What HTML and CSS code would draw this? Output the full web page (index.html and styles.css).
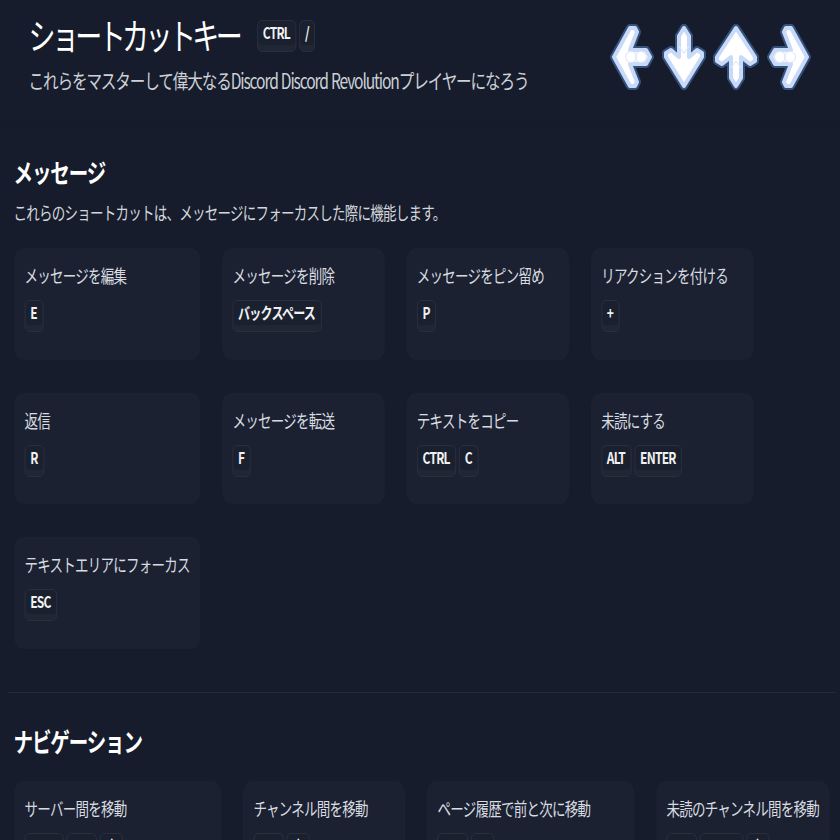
FILE: index.html
```html
<!DOCTYPE html>
<html lang="ja">
<head>
<meta charset="utf-8">
<title>ショートカットキー</title>
<link rel="stylesheet" href="styles.css">
</head>
<body>
<div class="page">
  <header class="hero">
    <div class="hero-text">
      <div class="hero-title-row">
        <h1 class="hero-title">ショートカットキー</h1>
        <div class="keys"><kbd class="key">CTRL</kbd><kbd class="key">/</kbd></div>
      </div>
      <p class="hero-sub">これらをマスターして偉大なるDiscord Discord Revolutionプレイヤーになろう</p>
    </div>
    <svg class="arrows" viewBox="606 20 210 74" preserveAspectRatio="none" aria-hidden="true">
      <g class="arrow-outline">
        <polygon points="614,57 630,28 635,28 637,32 630,50 646,50 650,57 646,64 630,64 637,82 635,86 630,86"/>
        <polygon points="684,86 666,57 666,53 671,50 679,57 679,36 684,28 689,36 689,57 697,50 702,53 702,57"/>
        <polygon points="736,28 755,57 755,61 750,64 741,57 741,78 736,86 731,78 731,57 722,64 717,61 717,57"/>
        <polygon points="807,57 791,28 786,28 784,32 791,50 775,50 771,57 775,64 791,64 784,82 786,86 791,86"/>
      </g>
      <g class="arrow-body">
        <polygon points="614,57 630,28 635,28 637,32 630,50 646,50 650,57 646,64 630,64 637,82 635,86 630,86"/>
        <polygon points="684,86 666,57 666,53 671,50 679,57 679,36 684,28 689,36 689,57 697,50 702,53 702,57"/>
        <polygon points="736,28 755,57 755,61 750,64 741,57 741,78 736,86 731,78 731,57 722,64 717,61 717,57"/>
        <polygon points="807,57 791,28 786,28 784,32 791,50 775,50 771,57 775,64 791,64 784,82 786,86 791,86"/>
      </g>
      <g class="arrow-detail">
        <ellipse cx="631" cy="57" rx="5.5" ry="5.5"/>
        <ellipse cx="641" cy="57" rx="5.5" ry="5.5"/>
        <path d="M679,46 L684,53 L689,46"/>
        <path d="M731,68 L736,61 L741,68"/>
        <ellipse cx="780" cy="57" rx="5.5" ry="5.5"/>
        <ellipse cx="790" cy="57" rx="5.5" ry="5.5"/>
      </g>
    </svg>
  </header>

  <section class="section">
    <h2 class="section-title">メッセージ</h2>
    <p class="section-desc">これらのショートカットは、メッセージにフォーカスした際に機能します。</p>
    <div class="grid grid-messages">
      <div class="card"><div class="card-label">メッセージを編集</div><div class="keys"><kbd class="key">E</kbd></div></div>
      <div class="card"><div class="card-label">メッセージを削除</div><div class="keys"><kbd class="key">バックスペース</kbd></div></div>
      <div class="card"><div class="card-label">メッセージをピン留め</div><div class="keys"><kbd class="key">P</kbd></div></div>
      <div class="card"><div class="card-label">リアクションを付ける</div><div class="keys"><kbd class="key">+</kbd></div></div>
      <div class="card"><div class="card-label">返信</div><div class="keys"><kbd class="key">R</kbd></div></div>
      <div class="card"><div class="card-label">メッセージを転送</div><div class="keys"><kbd class="key">F</kbd></div></div>
      <div class="card"><div class="card-label">テキストをコピー</div><div class="keys"><kbd class="key">CTRL</kbd><kbd class="key">C</kbd></div></div>
      <div class="card"><div class="card-label">未読にする</div><div class="keys"><kbd class="key">ALT</kbd><kbd class="key">ENTER</kbd></div></div>
      <div class="card"><div class="card-label">テキストエリアにフォーカス</div><div class="keys"><kbd class="key">ESC</kbd></div></div>
    </div>
  </section>

  <section class="section section-divided">
    <h2 class="section-title section-title-gap">ナビゲーション</h2>
    <div class="grid grid-nav">
      <div class="card"><div class="card-label">サーバー間を移動</div><div class="keys"><kbd class="key">CTRL</kbd><kbd class="key">ALT</kbd><kbd class="key">↑</kbd></div></div>
      <div class="card"><div class="card-label">チャンネル間を移動</div><div class="keys"><kbd class="key">ALT</kbd><kbd class="key">↑</kbd></div></div>
      <div class="card"><div class="card-label">ページ履歴で前と次に移動</div><div class="keys"><kbd class="key">ALT</kbd><kbd class="key">←</kbd></div></div>
      <div class="card"><div class="card-label">未読のチャンネル間を移動</div><div class="keys"><kbd class="key">ALT</kbd><kbd class="key">SHIFT</kbd><kbd class="key">↑</kbd></div></div>
    </div>
  </section>
</div>
</body>
</html>
```

FILE: styles.css
```css
html, body {
  margin: 0;
  padding: 0;
  height: 840px;
  overflow: hidden;
  background: #161c2b;
}

.page {
  width: 1120px;
  transform: scaleX(0.75);
  transform-origin: 0 0;
  font-family: "Noto Sans CJK JP", "Noto Sans", sans-serif;
  color: #d3d6dc;
}

.hero {
  display: flex;
  justify-content: space-between;
  align-items: center;
  height: 113px;
  padding: 0 32px 10px 38px;
  border-bottom: 1px solid #141a27;
}

.hero-text {
  margin-top: -5px;
}

.hero-title-row {
  display: flex;
  align-items: center;
  gap: 24px;
}

.hero-title {
  margin: 0;
  padding-bottom: 4px;
  font-size: 36px;
  line-height: 40px;
  letter-spacing: -4.8px;
  font-weight: 400;
  color: #fff;
}

.hero-sub {
  margin: 7px 0 0;
  font-size: 20.8px;
  line-height: 30px;
  letter-spacing: -1.5px;
  word-spacing: 1px;
  color: #ccd0d7;
}

.arrows {
  width: 280px;
  height: 74px;
  flex: none;
}

.arrow-outline polygon {
  fill: #35527f;
  stroke: #35527f;
  stroke-width: 8;
  stroke-linejoin: round;
}

.arrow-body polygon {
  fill: #fff;
  stroke: #c8daf8;
  stroke-width: 4;
  stroke-linejoin: round;
}

.arrow-detail path,
.arrow-detail ellipse {
  fill: none;
  stroke: #dfe9fb;
  stroke-width: 1.2;
}

.section {
  margin: 0 6px 0 9.5px;
  padding: 32px 9.2px 43px;
}

.section-title {
  margin: 0 0 0 -0.6px;
  font-size: 26px;
  line-height: 32px;
  letter-spacing: -1.5px;
  font-weight: 700;
  color: #fff;
}

.section-title-gap {
  margin-bottom: 24px;
}

.section-divided {
  border-top: 1px solid #232a39;
}

.section-desc {
  margin: 12px 0 24px -0.6px;
  font-size: 18px;
  line-height: 24px;
  letter-spacing: -1px;
  color: #d3d6dc;
}

.grid {
  display: grid;
  column-gap: 28.8px;
  row-gap: 33px;
}

.grid-messages {
  grid-template-columns: 248.5px 217px 217px 217px;
}

.grid-nav {
  grid-template-columns: 276.5px 216.5px 276.5px 231px;
}

.card {
  box-sizing: border-box;
  height: 111.5px;
  padding: 15px 14px 0;
  background: #1b2130;
  border-radius: 12px;
}

.card-label {
  font-size: 18px;
  line-height: 24px;
  letter-spacing: -1px;
  white-space: nowrap;
  color: #d8dbe0;
}

.card .keys {
  margin-top: 13px;
}

.keys {
  display: flex;
  gap: 4px;
}

.key {
  box-sizing: border-box;
  height: 32px;
  padding: 0 7.5px 0 6.5px;
  font-family: inherit;
  font-size: 16px;
  line-height: 23px;
  letter-spacing: -1px;
  font-weight: 700;
  white-space: nowrap;
  color: #f0f1f4;
  background: #1a202d;
  border: 1px solid #2a3140;
  border-radius: 6px;
  box-shadow: inset 0 -6px 0 #1f2634;
}
```
